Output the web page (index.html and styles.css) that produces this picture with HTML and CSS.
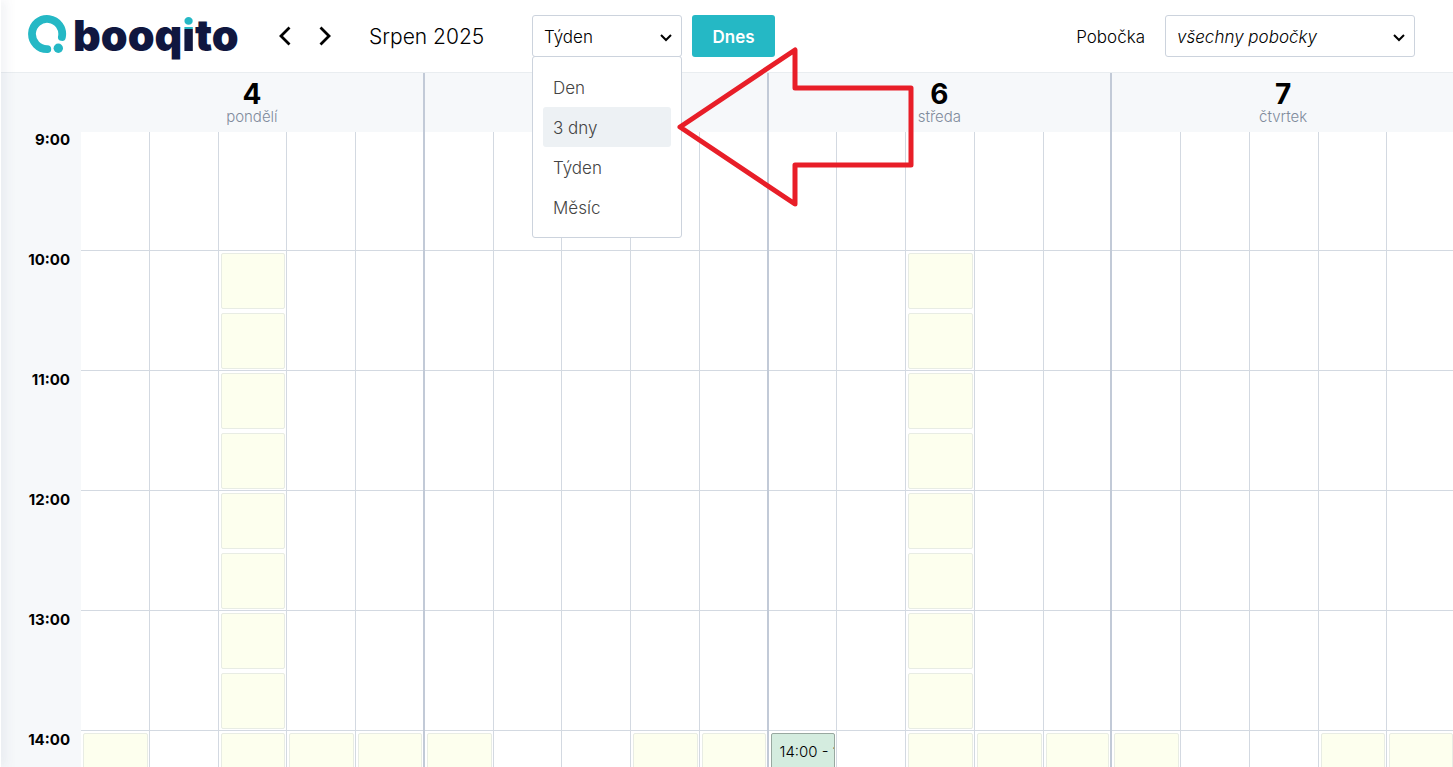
FILE: index.html
```html
<!DOCTYPE html>
<html lang="cs">
<head>
  <meta charset="UTF-8">
  <meta name="viewport" content="width=device-width, initial-scale=1.0">
  <title>Booqito - kalendář</title>
  <link rel="stylesheet" href="styles.css">
</head>
<body>
  <div class="app">
    <div class="sidebar-edge"></div>
    <main class="content">
      <header class="toolbar">
        <a href="#" class="logo">
          <svg class="logo-mark" width="40" height="44" viewBox="0 0 40 44" aria-hidden="true">
            <path d="M20.300 35.100 A15.100 15.100 0 1 1 34.900 23" fill="none" stroke="#25b8c5" stroke-width="7.800" stroke-linecap="round"/>
            <circle cx="31.300" cy="34.300" r="4.700" fill="#25b8c5"/>
          </svg>
          <span class="logo-text">booq<span class="logo-i">i</span>to</span>
        </a>
        <nav class="arrows">
          <button type="button" class="arrow" aria-label="Předchozí">
            <svg width="14" height="22" viewBox="0 0 14 22"><path d="M11.500 2.500 3 11l8.500 8.500" fill="none" stroke="#000" stroke-width="2.800"/></svg>
          </button>
          <button type="button" class="arrow" aria-label="Další">
            <svg width="14" height="22" viewBox="0 0 14 22"><path d="M2.500 2.500 11 11l-8.500 8.500" fill="none" stroke="#000" stroke-width="2.800"/></svg>
          </button>
        </nav>
        <h1 class="month">Srpen 2025</h1>
        <div class="select view-select">
          <select aria-label="Zobrazení">
            <option>Týden</option>
          </select>
          <svg class="chevron" width="14" height="10" viewBox="0 0 14 10"><path d="M2 2l5 5 5-5" fill="none" stroke="#000" stroke-width="2"/></svg>
          <ul class="menu">
            <li><button type="button">Den</button></li>
            <li><button type="button" class="active">3 dny</button></li>
            <li><button type="button">Týden</button></li>
            <li><button type="button">Měsíc</button></li>
          </ul>
          <svg class="pointer" width="240" height="164" viewBox="0 0 240 164" aria-hidden="true">
            <path d="M4 82 119 5V43H235V120H119V159Z" fill="none" stroke="#e81e28" stroke-width="5" stroke-linejoin="round"/>
          </svg>
        </div>
        <button type="button" class="today">Dnes</button>
        <label class="branch-label" for="branch">Pobočka</label>
        <div class="select branch-select">
          <select id="branch">
            <option>všechny pobočky</option>
          </select>
          <svg class="chevron" width="14" height="10" viewBox="0 0 14 10"><path d="M2 2l5 5 5-5" fill="none" stroke="#000" stroke-width="2"/></svg>
        </div>
      </header>

      <section class="calendar">
        <div class="times">
          <span>9:00</span>
          <span>10:00</span>
          <span>11:00</span>
          <span>12:00</span>
          <span>13:00</span>
          <span>14:00</span>
        </div>
        <div class="days">
          <div class="day">
            <div class="day-head"><strong>4</strong><span>pondělí</span></div>
            <div class="cols">
              <div class="col"><div class="slot at-14"></div></div>
              <div class="col"></div>
              <div class="col">
                <div class="slot at-10"></div>
                <div class="slot"></div>
                <div class="slot"></div>
                <div class="slot"></div>
                <div class="slot"></div>
                <div class="slot"></div>
                <div class="slot"></div>
                <div class="slot"></div>
                <div class="slot"></div>
              </div>
              <div class="col"><div class="slot at-14"></div></div>
              <div class="col"><div class="slot at-14"></div></div>
            </div>
          </div>
          <div class="day">
            <div class="day-head"></div>
            <div class="cols">
              <div class="col"><div class="slot at-14"></div></div>
              <div class="col"></div>
              <div class="col"></div>
              <div class="col"><div class="slot at-14"></div></div>
              <div class="col"><div class="slot at-14"></div></div>
            </div>
          </div>
          <div class="day">
            <div class="day-head"><strong>6</strong><span>středa</span></div>
            <div class="cols">
              <div class="col"><div class="slot booked at-14">14:00 - 15:00</div></div>
              <div class="col"></div>
              <div class="col">
                <div class="slot at-10"></div>
                <div class="slot"></div>
                <div class="slot"></div>
                <div class="slot"></div>
                <div class="slot"></div>
                <div class="slot"></div>
                <div class="slot"></div>
                <div class="slot"></div>
                <div class="slot"></div>
              </div>
              <div class="col"><div class="slot at-14"></div></div>
              <div class="col"><div class="slot at-14"></div></div>
            </div>
          </div>
          <div class="day">
            <div class="day-head"><strong>7</strong><span>čtvrtek</span></div>
            <div class="cols">
              <div class="col"><div class="slot at-14"></div></div>
              <div class="col"></div>
              <div class="col"></div>
              <div class="col"><div class="slot at-14"></div></div>
              <div class="col"><div class="slot at-14"></div></div>
            </div>
          </div>
        </div>
      </section>
    </main>
  </div>
</body>
</html>
```
FILE: styles.css
```css
* {
  box-sizing: border-box;
}

body {
  margin: 0;
  font-family: Inter, "Noto Sans", sans-serif;
  font-size: 17px;
  font-weight: 300;
  color: #000;
  background: #fff;
}

button,
select {
  font: inherit;
  color: inherit;
}

.app {
  display: flex;
  height: 100vh;
  overflow: hidden;
}

/* edge of the collapsed side menu */
.sidebar-edge {
  position: relative;
  z-index: 5;
  width: 1px;
  background: #fff;
  box-shadow: 0 0 12px rgba(50, 70, 110, 0.7);
}

.content {
  flex: 1;
  min-width: 0;
  display: flex;
  flex-direction: column;
}

/* toolbar */
.toolbar {
  display: flex;
  align-items: center;
  height: 73px;
  padding: 0 38px 0 26px;
  border-bottom: 1px solid #e9edf0;
}

.logo {
  display: flex;
  align-items: center;
  gap: 6px;
  width: 251px;
  color: #10173f;
  text-decoration: none;
}

.logo-text {
  padding-bottom: 2px;
  font-size: 43px;
  font-weight: 900;
  line-height: 54px;
}

/* teal dot over the i */
.logo-i {
  background: linear-gradient(#25b8c5 38%, #10173f 38%);
  -webkit-background-clip: text;
  background-clip: text;
  color: transparent;
}

.arrows {
  display: flex;
  gap: 26px;
}

.arrow {
  display: flex;
  padding: 0;
  border: 0;
  background: none;
  cursor: pointer;
}

.month {
  width: 163px;
  margin: 0 0 0 37px;
  font-size: 21px;
  font-weight: 300;
  white-space: nowrap;
}

.select {
  position: relative;
  height: 42px;
}

.select select {
  width: 100%;
  height: 100%;
  padding: 2px 32px 0 11px;
  border: 1px solid #ccd3dd;
  border-radius: 3px;
  background: #fff;
  appearance: none;
}

.chevron {
  position: absolute;
  top: 18px;
  right: 9px;
  pointer-events: none;
}

.view-select {
  width: 150px;
  margin-right: 10px;
}

.menu {
  position: absolute;
  z-index: 10;
  top: 41px;
  left: 0;
  width: 100%;
  margin: 0;
  padding: 10px;
  border: 1px solid #ccd3dd;
  border-radius: 3px;
  background: #fff;
  list-style: none;
}

.menu button {
  display: block;
  width: 100%;
  height: 40px;
  padding: 2px 10px 0;
  border: 0;
  border-radius: 3px;
  background: none;
  color: #444;
  text-align: left;
  cursor: pointer;
}

.menu .active,
.menu button:hover {
  background: #edf1f4;
}

.pointer {
  position: absolute;
  z-index: 11;
  top: 30px;
  left: 144px;
  pointer-events: none;
}

.today {
  width: 83px;
  height: 42px;
  padding: 2px 0 0;
  border: 0;
  border-radius: 3px;
  background: #25b8c5;
  color: #fff;
  font-weight: 600;
  cursor: pointer;
}

.branch-label {
  margin: 0 20px 0 auto;
  padding-top: 2px;
}

.branch-select {
  width: 250px;
}

.branch-select select {
  font-style: italic;
}

/* calendar */
.calendar {
  flex: 1;
  min-height: 0;
  display: flex;
  overflow: hidden;
}

.times {
  width: 80px;
  padding: 58px 11px 0 0;
  background: #f6f8fa;
  font-size: 15px;
  font-weight: 700;
  text-align: right;
}

.times span {
  display: block;
  height: 120px;
  line-height: 18px;
}

.days {
  flex: 1;
  display: grid;
  grid-template-columns: repeat(4, 1fr);
  margin-right: -3px;
}

.day-head {
  display: flex;
  flex-direction: column;
  align-items: center;
  height: 59px;
  padding-top: 5px;
  border-right: 2px solid #c2cad7;
  background: #f6f8fa;
}

.day-head strong {
  font-size: 28px;
  font-weight: 700;
  line-height: 32px;
}

.day-head span {
  color: #808b9c;
  font-size: 15px;
  line-height: 14px;
}

.cols {
  display: grid;
  grid-template-columns: repeat(5, 1fr);
}

/* one line per hour, two half-hour slots between the lines */
.col {
  display: flex;
  flex-direction: column;
  gap: 4px;
  min-width: 0;
  height: 719px;
  padding: 0 1px 0 2px;
  border-right: 1px solid #d3d9e1;
  background: repeating-linear-gradient(transparent 0 118px, #d3d9e1 118px 119px, transparent 119px 120px);
}

.col:last-child {
  border-right: 2px solid #c2cad7;
}

.slot {
  flex: none;
  height: 56px;
  border: 1px solid #e8ece4;
  border-radius: 2px;
  background: #fdffee;
}

.booked {
  padding: 0 0 0 8px;
  border-color: #98a8a0;
  background: #d4ecdf;
  font-size: 15px;
  line-height: 36px;
  white-space: nowrap;
  overflow: hidden;
}

.at-10 {
  margin-top: 121px;
}

.at-14 {
  margin-top: 601px;
}
```
